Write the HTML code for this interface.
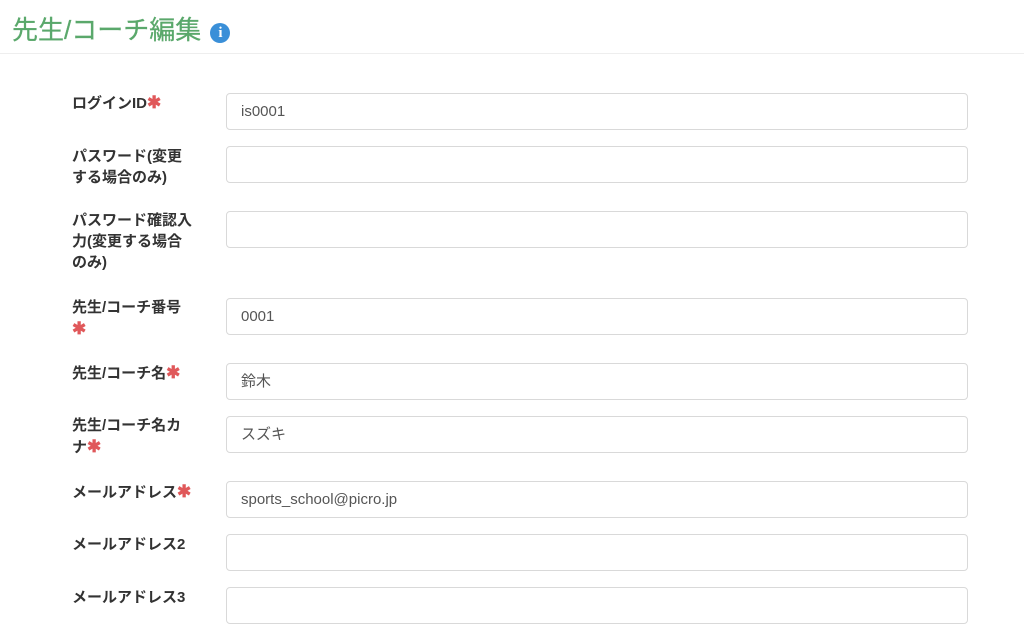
<!DOCTYPE html>
<html><head><meta charset="utf-8"><style>
body{margin:0;width:1024px;height:634px;overflow:hidden;background:#fff;font-family:"Liberation Sans","Noto Sans CJK JP",sans-serif;color:#333}
h1{position:absolute;left:12px;top:10px;margin:0;font-size:26px;font-weight:normal;color:#5aa86b;line-height:40px;white-space:nowrap;-webkit-text-stroke:0.25px #5aa86b}
.info{display:inline-block;width:20px;height:20px;border-radius:50%;background:#3a8fd8;color:#fff;font:bold 15px/20px "Liberation Serif",serif;text-align:center;vertical-align:2px;margin-left:2px;-webkit-text-stroke:0}
.hr{position:absolute;left:0;right:0;top:53px;border-top:1px solid #eee}
.l{position:absolute;left:72px;font-size:15px;font-weight:bold;line-height:21px;white-space:nowrap;color:#333}
.s{color:#e0585a;font-size:17px}
.i{position:absolute;left:226px;width:742px;border:1px solid #d9d9d9;border-radius:4px;box-sizing:border-box;height:37px;font-size:15px;color:#555;line-height:35px;padding-left:14px}
</style></head><body>
<h1>先生/コーチ編集 <span class="info">i</span></h1>
<div class="hr"></div>
<div class="l" style="top:92px">ログインID<span class="s">✱</span></div><div class="i" style="top:93px">is0001</div>
<div class="l" style="top:146px">パスワード(変更<br>する場合のみ)</div><div class="i" style="top:146px"></div>
<div class="l" style="top:210px">パスワード確認入<br>力(変更する場合<br>のみ)</div><div class="i" style="top:211px"></div>
<div class="l" style="top:297px">先生/コーチ番号<br><span class="s">✱</span></div><div class="i" style="top:298px">0001</div>
<div class="l" style="top:362px">先生/コーチ名<span class="s">✱</span></div><div class="i" style="top:363px">鈴木</div>
<div class="l" style="top:415px">先生/コーチ名カ<br>ナ<span class="s">✱</span></div><div class="i" style="top:416px">スズキ</div>
<div class="l" style="top:481px">メールアドレス<span class="s">✱</span></div><div class="i" style="top:481px">sports_school@picro.jp</div>
<div class="l" style="top:534px">メールアドレス2</div><div class="i" style="top:534px"></div>
<div class="l" style="top:587px">メールアドレス3</div><div class="i" style="top:587px"></div>
</body></html>
